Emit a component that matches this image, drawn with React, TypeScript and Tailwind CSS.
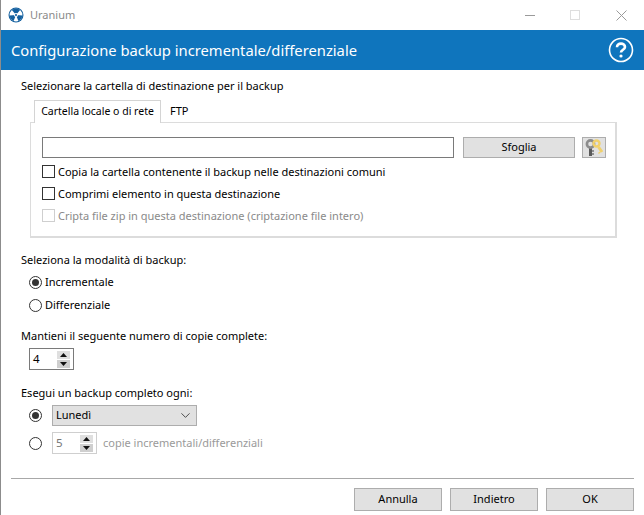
import React from 'react';
import { ChevronDown } from 'lucide-react';

const font = { fontFamily: '"Noto Sans", "Open Sans", sans-serif' };

const Check = ({ label, disabled }: { label: string; disabled?: boolean }) => (
  <div className={`flex items-center h-[13px] gap-[3px] ${disabled ? 'text-[#8a8a8a]' : 'text-black'}`}>
    <div className={`w-[13px] h-[13px] bg-white border ${disabled ? 'border-[#cfcfcf]' : 'border-[#333333]'}`} />
    <span className="text-[11px] leading-[13px] whitespace-nowrap">{label}</span>
  </div>
);

const Radio = ({ checked }: { checked?: boolean }) => (
  <div className="w-[13px] h-[13px] rounded-full border border-[#333333] bg-white flex items-center justify-center shrink-0">
    {checked && <div className="w-[7px] h-[7px] rounded-full bg-[#333333]" />}
  </div>
);

const SpinArrows = () => (
  <div className="flex flex-col gap-px">
    <div className="w-[13px] h-[8px] bg-[#dfdfdf] flex items-center justify-center">
      <svg width="7" height="4" viewBox="0 0 7 4"><path d="M3.5 0L7 4H0z" fill="#111" /></svg>
    </div>
    <div className="w-[13px] h-[8px] bg-[#cfcfcf] flex items-center justify-center">
      <svg width="7" height="4" viewBox="0 0 7 4"><path d="M0 0h7L3.5 4z" fill="#111" /></svg>
    </div>
  </div>
);

const Spin = ({ value, disabled }: { value: string; disabled?: boolean }) => (
  <div className={`w-[45px] h-[22px] border flex items-center justify-between pl-[2px] pr-[3px] bg-white ${disabled ? 'border-[#cfcfcf] text-[#777777]' : 'border-[#7a7a7a] text-black'}`}>
    <span className="text-[11.5px] pl-[1px]">{value}</span>
    <SpinArrows />
  </div>
);

const Btn = ({ label }: { label: string }) => (
  <button className="w-[88px] h-[23px] bg-[#e1e1e1] border border-[#adadad] text-[11px] text-black">{label}</button>
);

const Logo = () => (
  <svg width="16" height="16" viewBox="0 0 16 16">
    <circle cx="8" cy="8" r="7.5" fill="#14609f" />
    <circle cx="8" cy="8" r="6.4" fill="#ffffff" />
    <path d="M8 8L3.9 3A6.4 6.4 0 0 1 12.1 3Z" fill="#14609f" />
    <path d="M8 8L14.4 8.6A6.4 6.4 0 0 1 10.4 13.9Z" fill="#14609f" />
    <path d="M8 8L5.6 13.9A6.4 6.4 0 0 1 1.6 8.6Z" fill="#14609f" />
    <circle cx="8" cy="8" r="2" fill="#ffffff" />
    <circle cx="8" cy="8" r="1.1" fill="#14609f" />
  </svg>
);

const Keys = () => (
  <svg width="20" height="19" viewBox="0 0 20 19" fill="none">
    {/* gray key */}
    <path d="M6.5 10v8" stroke="#5a5a5a" strokeWidth="3" />
    <path d="M8 13h2M8 16h2" stroke="#777777" strokeWidth="1.5" />
    <circle cx="6.5" cy="6" r="3.6" stroke="#8c8c8c" strokeWidth="2.6" />
    {/* yellow key */}
    <path d="M14.5 9l3.5 5" stroke="#f1d16c" strokeWidth="3" />
    <path d="M16 14l-1.5 1.5" stroke="#f1d16c" strokeWidth="1.5" />
    <circle cx="12.5" cy="5.5" r="3" stroke="#f1d16c" strokeWidth="2.4" />
  </svg>
);

const HelpIcon = () => (
  <svg width="26" height="26" viewBox="0 0 26 26" fill="none" stroke="#ffffff">
    <circle cx="13" cy="13" r="11.5" strokeWidth="1.6" />
    <path d="M9 10.2c0-2.3 1.8-3.6 4-3.6s4 1.3 4 3.3c0 2.8-4 2.8-4 5.6" strokeWidth="2.6" />
    <circle cx="13" cy="19" r="1.6" fill="#ffffff" stroke="none" />
  </svg>
);

const WindowIcons = () => (
  <div className="ml-auto flex items-center pr-[17px]">
    <svg width="10" height="10" viewBox="0 0 10 10"><path d="M0 5.5h10" stroke="#9a9a9a" /></svg>
    <svg className="ml-[35px]" width="10" height="10" viewBox="0 0 10 10"><rect x="0.5" y="0.5" width="9" height="9" fill="none" stroke="#dedede" /></svg>
    <svg className="ml-[36px]" width="11" height="11" viewBox="0 0 11 11"><path d="M0.5 0.5l10 10M10.5 0.5l-10 10" stroke="#9a9a9a" /></svg>
  </div>
);

export default function App() {
  return (
    <div className="w-[644px] h-[515px] bg-white border-l border-[#8c8c8c] flex flex-col overflow-hidden" style={font}>
      {/* title bar */}
      <div className="h-[30px] flex items-center pl-[7px] shrink-0">
        <Logo />
        <span className="ml-[6px] text-[11px] text-[#8a8a8a]">Uranium</span>
        <WindowIcons />
      </div>

      {/* header */}
      <div className="h-[40px] bg-[#0f75bd] flex items-center justify-between pl-[10px] pr-[10px] shrink-0">
        <h1 className="text-[14.75px] text-white font-normal">Configurazione backup incrementale/differenziale</h1>
        <HelpIcon />
      </div>

      <div className="flex-1 flex flex-col pl-[20px] text-[11px] text-black">
        <p className="mt-[8px] leading-[16px]">Selezionare la cartella di destinazione per il backup</p>

        {/* tabs */}
        <div className="mt-[5px] ml-[13px] flex items-end h-[23px]">
          <div className="w-[127px] h-[23px] border border-b-0 border-[#d4d4d4] bg-white flex items-center justify-center relative z-10 -mb-px text-[10.5px]">Cartella locale o di rete</div>
          <div className="px-[9px] h-[22px] flex items-center">FTP</div>
        </div>
        <div className="ml-[9px] w-[587px] h-[116px] border-2 border-t border-l border-[#dcdcdc] pl-[11px] pt-[14px]">
          <div className="flex items-center">
            <div className="w-[412px] h-[21px] border border-[#7a7a7a] bg-white" />
            <button className="ml-[9px] w-[112px] h-[21px] bg-[#e1e1e1] border border-[#adadad]">Sfoglia</button>
            <button className="ml-[7px] w-[24px] h-[21px] bg-[#e1e1e1] border border-[#adadad] flex items-center justify-center"><Keys /></button>
          </div>
          <div className="mt-[7px] flex flex-col gap-[9px]">
            <Check label="Copia la cartella contenente il backup nelle destinazioni comuni" />
            <Check label="Comprimi elemento in questa destinazione" />
            <Check label="Cripta file zip in questa destinazione (criptazione file intero)" disabled />
          </div>
        </div>

        {/* modalita */}
        <p className="mt-[14px] leading-[16px]">Seleziona la modalità di backup:</p>
        <div className="mt-[8px] ml-[8px] flex items-center gap-[3px] h-[13px]"><Radio checked /><span>Incrementale</span></div>
        <div className="mt-[10px] ml-[8px] flex items-center gap-[3px] h-[13px]"><Radio /><span>Differenziale</span></div>

        {/* copie */}
        <p className="mt-[16px] leading-[16px]">Mantieni il seguente numero di copie complete:</p>
        <div className="mt-[4px] ml-[8px]"><Spin value="4" /></div>

        {/* backup completo */}
        <p className="mt-[15px] leading-[16px]">Esegui un backup completo ogni:</p>
        <div className="mt-[4px] ml-[8px] flex items-center gap-[10px]">
          <Radio checked />
          <div className="w-[145px] h-[21px] bg-[#e1e1e1] border border-[#adadad] flex items-center justify-between pl-[3px] pr-[3px]">
            <span>Lunedì</span>
            <ChevronDown size={15} strokeWidth={1.25} className="text-[#222222]" />
          </div>
        </div>
        <div className="mt-[6px] ml-[8px] flex items-center">
          <Radio />
          <div className="ml-[10px]"><Spin value="5" disabled /></div>
          <span className="ml-[6px] text-[#9a9a9a]">copie incrementali/differenziali</span>
        </div>
      </div>

      {/* footer */}
      <div className="mx-[10px] border-t border-[#a8a8a8] h-[37px] flex justify-end items-start pt-[9px] gap-[8px] shrink-0">
        <Btn label="Annulla" />
        <Btn label="Indietro" />
        <Btn label="OK" />
      </div>
    </div>
  );
}
